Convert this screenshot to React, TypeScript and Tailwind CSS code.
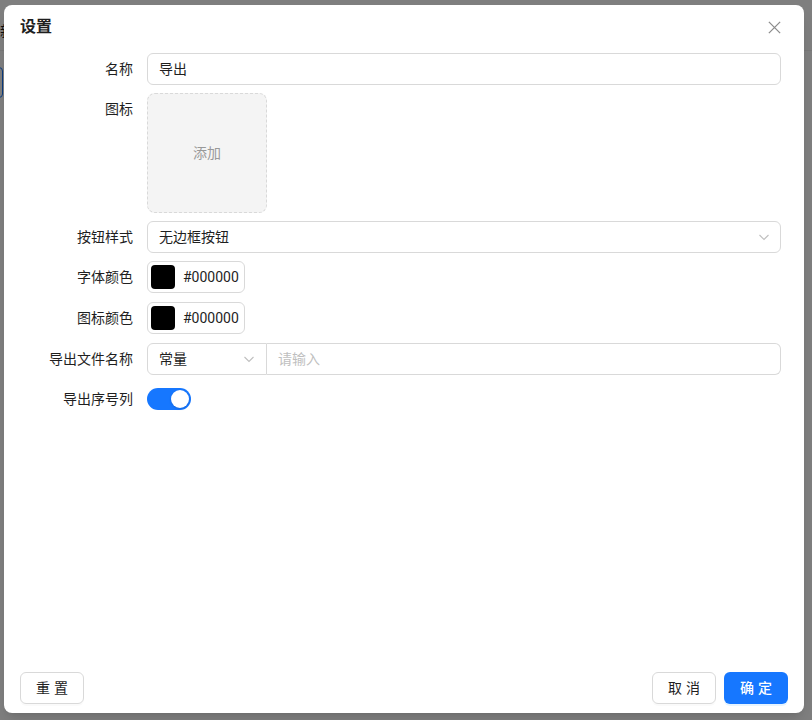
import type React from "react"

const font = { fontFamily: 'Roboto, "Noto Sans CJK SC", sans-serif' }

function Chevron({ className = "" }: { className?: string }) {
  return (
    <svg viewBox="0 0 12 12" className={`w-3 h-3 ${className}`} fill="none" stroke="#bfbfbf" strokeWidth="1.1">
      <path d="M1.5 4l4.5 4.5L10.5 4" />
    </svg>
  )
}

function Row({ label, children, top = false }: { label: string; children: React.ReactNode; top?: boolean }) {
  return (
    <div className={`flex ${top ? "items-start" : "items-center"}`}>
      <div className="w-[113px] shrink-0 h-8 flex items-center justify-end text-sm text-[#1f1f1f]">{label}</div>
      <div className="flex-1 ml-[14px] min-w-0 flex flex-col">{children}</div>
    </div>
  )
}

function ColorPicker() {
  return (
    <div className="flex items-center h-8 w-[98px] border border-[#d9d9d9] rounded-md pl-[3px] bg-white">
      <div className="w-6 h-6 rounded-[4px] bg-black" />
      <span className="ml-2 text-sm text-[#1f1f1f]">#000000</span>
    </div>
  )
}

const App: React.FC = () => {
  return (
    <div className="relative w-[812px] h-[720px] overflow-hidden bg-white" style={font}>
      {/* page underneath */}
      <div className="absolute left-0 top-[21px] text-sm text-[#1f1f1f]">新</div>
      <div className="absolute left-0 right-0 top-[50px] h-px bg-[#f0f0f0]" />
      <div className="absolute left-[-40px] top-[67px] w-[43px] h-[31px] border border-[#1677ff] rounded" />

      {/* mask */}
      <div className="absolute inset-0 bg-black/50" />

      {/* modal */}
      <div className="absolute left-[4px] top-[5px] w-[800px] h-[708px] bg-white rounded-lg shadow-lg flex flex-col">
        <div className="flex items-center justify-between h-[43px] pl-4 pr-[22px] pt-px">
          <span className="text-base font-semibold text-[#1f1f1f]">设置</span>
          <svg viewBox="0 0 16 16" className="w-[15px] h-[15px]" fill="none" stroke="#8c8c8c" strokeWidth="1.4">
            <path d="M2 2l12 12M14 2L2 14" />
          </svg>
        </div>

        <div className="flex-1 flex flex-col pl-4 pr-[23px] pt-[5px]">
          <Row label="名称">
            <div className="h-8 border border-[#d9d9d9] rounded-md px-[11px] flex items-center text-sm text-[#1f1f1f]">导出</div>
          </Row>
          <div className="mt-2">
            <Row label="图标" top>
              <div className="w-[120px] h-[120px] border border-dashed border-[#d9d9d9] rounded-lg bg-[#f4f4f4] flex items-center justify-center text-sm text-[#999]">
                添加
              </div>
            </Row>
          </div>
          <div className="mt-2">
            <Row label="按钮样式">
              <div className="h-8 border border-[#d9d9d9] rounded-md pl-[11px] pr-[10px] flex items-center justify-between text-sm text-[#1f1f1f]">
                <span>无边框按钮</span>
                <Chevron />
              </div>
            </Row>
          </div>
          <div className="mt-2">
            <Row label="字体颜色">
              <ColorPicker />
            </Row>
          </div>
          <div className="mt-[9px]">
            <Row label="图标颜色">
              <ColorPicker />
            </Row>
          </div>
          <div className="mt-[9px]">
            <Row label="导出文件名称">
              <div className="flex h-8 text-sm">
                <div className="w-[120px] border border-[#d9d9d9] rounded-l-md pl-[11px] pr-[11px] flex items-center justify-between text-[#1f1f1f]">
                  <span>常量</span>
                  <Chevron />
                </div>
                <div className="flex-1 border border-l-0 border-[#d9d9d9] rounded-r-md px-[11px] flex items-center text-[#bfbfbf]">
                  请输入
                </div>
              </div>
            </Row>
          </div>
          <div className="mt-2">
            <Row label="导出序号列">
              <div className="w-11 h-[22px] rounded-full bg-[#1677ff] flex items-center justify-end pr-[2px]">
                <div className="w-[18px] h-[18px] rounded-full bg-white shadow-sm" />
              </div>
            </Row>
          </div>
        </div>

        <div className="flex items-center justify-between px-4 pb-[9px]">
          <button className="w-16 h-8 border border-[#d9d9d9] rounded-md text-sm text-[#1f1f1f] tracking-[4px] pl-1 shadow-[0_2px_0_rgba(0,0,0,0.02)]">
            重置
          </button>
          <div className="flex gap-2">
            <button className="w-16 h-8 border border-[#d9d9d9] rounded-md text-sm text-[#1f1f1f] tracking-[4px] pl-1 shadow-[0_2px_0_rgba(0,0,0,0.02)]">
              取消
            </button>
            <button className="w-16 h-8 rounded-md bg-[#1677ff] text-sm text-white font-medium tracking-[4px] pl-1 shadow-[0_2px_0_rgba(5,145,255,0.1)]">
              确定
            </button>
          </div>
        </div>
      </div>
    </div>
  )
}

export default App
